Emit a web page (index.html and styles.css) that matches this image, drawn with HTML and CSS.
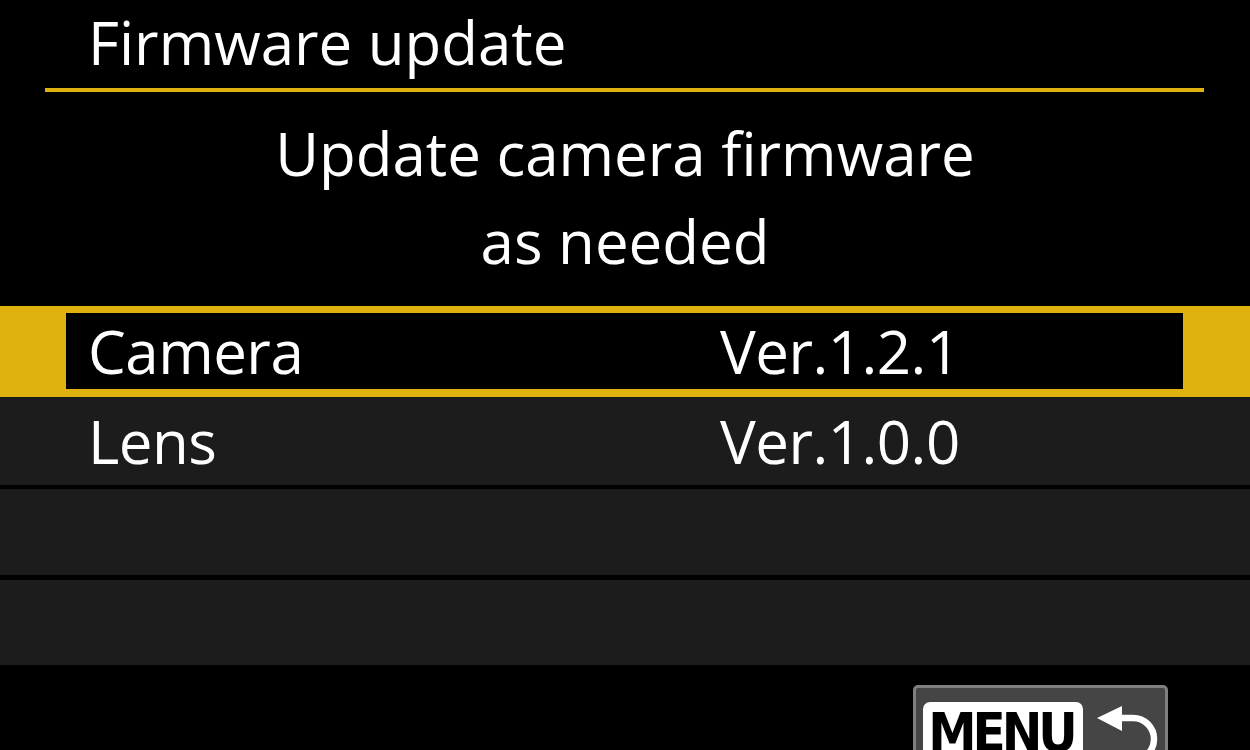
FILE: index.html
```html
<!DOCTYPE html>
<html>
<head>
<meta charset="utf-8">
<link rel="stylesheet" href="styles.css">
</head>
<body>
<div class="screen">
  <header class="header">
    <h1 class="title">Firmware update</h1>
  </header>
  <div class="message">
    <p>Update camera firmware</p>
    <p>as needed</p>
  </div>
  <ul class="list">
    <li class="row selected">
      <div class="row-inner"><span class="label">Camera</span><span class="value">Ver.1.2.1</span></div>
    </li>
    <li class="row lens">
      <div class="row-inner"><span class="label">Lens</span><span class="value">Ver.1.0.0</span></div>
    </li>
    <li class="row empty"></li>
    <li class="row empty last"></li>
  </ul>
  <footer class="footer">
    <div class="menu-btn">
      <span class="menu-key">MENU</span>
      <svg class="back-icon" width="70" height="60" viewBox="0 0 70 60">
        <polygon points="4,15 29,3 29,28" fill="#fff"/>
        <path d="M27 15 H40 A21 21 0 0 1 40 57 H20" fill="none" stroke="#fff" stroke-width="6.5"/>
      </svg>
    </div>
  </footer>
</div>
</body>
</html>
```
FILE: styles.css
```css
html, body {
  margin: 0;
  padding: 0;
  background: #000;
}
body {
  width: 1250px;
  height: 750px;
  overflow: hidden;
  font-family: "Open Sans", "Noto Sans", sans-serif;
  color: #fff;
}
.screen {
  display: flex;
  flex-direction: column;
  height: 750px;
}
.screen > * {
  flex-shrink: 0;
}
.header {
  margin: 0 46px 0 45px;
  height: 88px;
  border-bottom: 4px solid #dfb20f;
  box-sizing: content-box;
}
.title {
  margin: 0;
  padding-left: 43px;
  font-weight: 400;
  font-size: 60px;
  line-height: 90px;
  position: relative;
  top: -3px;
}
.message {
  text-align: center;
  font-size: 60px;
  padding-top: 17px;
  height: 214px;
  box-sizing: border-box;
}
.message p {
  margin: 0;
  line-height: 88px;
}
.list {
  list-style: none;
  margin: 0;
  padding: 0;
  display: flex;
  flex-direction: column;
}
.row {
  background: #1c1c1c;
  font-size: 60px;
  letter-spacing: -0.5px;
  flex-shrink: 0;
}
.row-inner {
  display: flex;
  align-items: center;
  height: 100%;
  padding-left: 22px;
  box-sizing: border-box;
}
.label {
  width: 632px;
}
.selected {
  background: #dfb20f;
  height: 91px;
  padding: 7px 67px 8px 66px;
  box-sizing: border-box;
}
.selected .row-inner {
  background: #000;
}
.lens {
  height: 88px;
}
.lens .row-inner {
  padding-left: 88px;
}
.empty {
  height: 86px;
  margin-top: 4px;
}
.last {
  height: 85px;
  margin-top: 5px;
}
.footer {
  display: flex;
  justify-content: flex-end;
  padding-right: 82px;
  padding-top: 20px;
}
.menu-btn {
  width: 255px;
  height: 80px;
  box-sizing: border-box;
  background: #454545;
  border: 3px solid #7f7f7f;
  border-radius: 5px;
  display: flex;
  align-items: flex-start;
  padding: 14px 0 0 7px;
  gap: 10px;
}
.menu-key {
  background: #fff;
  color: #000;
  border-radius: 7px;
  width: 160px;
  height: 70px;
  font-family: "DejaVu Sans Condensed", "DejaVu Sans", sans-serif;
  font-stretch: condensed;
  font-weight: 700;
  font-size: 54px;
  line-height: 62px;
  text-align: center;
  letter-spacing: -4px;
  text-indent: -4px;
}
.back-icon {
  display: block;
  margin-top: 1px;
}
```
